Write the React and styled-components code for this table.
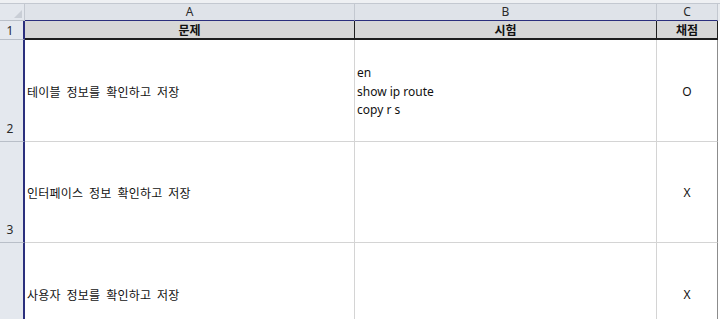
import React from 'react';
import styled, { createGlobalStyle } from 'styled-components';

const GlobalStyle = createGlobalStyle`
	html, body {
		margin: 0;
		padding: 0;
		background: #ffffff;
		overflow: hidden;
	}
	body {
		font-family: 'Noto Sans', 'Noto Sans CJK KR', sans-serif;
		font-size: 12px;
		color: #111;
	}
`;

const rows = [
	{ num: 2, task: '테이블 정보를 확인하고 저장', exam: ['en', 'show ip route', 'copy r s'], mark: 'O' },
	{ num: 3, task: '인터페이스 정보 확인하고 저장', exam: [], mark: 'X' },
	{ num: '', task: '사용자 정보를 확인하고 저장', exam: [], mark: 'X' },
];

const App = () => {
	return (
		<>
			<GlobalStyle />
			<StyledSheet>
				<div className='ribbon-edge' />
				<Grid>
					<Corner>
						<svg width='8' height='8' viewBox='0 0 8 8'>
							<polygon points='8,0 8,8 0,8' fill='#c9ced6' />
						</svg>
					</Corner>
					<ColHeader>A</ColHeader>
					<ColHeader>B</ColHeader>
					<ColHeader>C</ColHeader>
					<Filler $top />

					<RowHeader $first>1</RowHeader>
					<TitleCell>문제</TitleCell>
					<TitleCell>시험</TitleCell>
					<TitleCell>채점</TitleCell>
					<Filler />

					{rows.map((row, i) => (
						<React.Fragment key={i}>
							<RowHeader>{row.num}</RowHeader>
							<Cell>
								<Hangul>{row.task}</Hangul>
							</Cell>
							<Cell>
								{row.exam.map((line) => (
									<span key={line}>{line}</span>
								))}
							</Cell>
							<Cell $center $last>
								{row.mark}
							</Cell>
							<Filler />
						</React.Fragment>
					))}
				</Grid>
			</StyledSheet>
		</>
	);
};

const StyledSheet = styled.section`
	width: 720px;
	height: 319px;
	overflow: hidden;
	background: #ffffff;
	.ribbon-edge {
		height: 3px;
		background: #eef0f3;
		border-bottom: 1px solid #c3c8d0;
	}
`;

const Grid = styled.div`
	display: grid;
	grid-template-columns: 25px 330px 302px 61px 2px;
	grid-template-rows: 17px 19px 102px 101px 102px;
`;

const Corner = styled.div`
	background: #e3e7ed;
	border-right: 1px solid #c3c8d0;
	border-bottom: 1px solid #b9bfc8;
	display: flex;
	align-items: flex-end;
	justify-content: flex-end;
	padding: 0 2px 2px 0;
`;

const ColHeader = styled.div`
	background: #dfe3e9;
	border-right: 1px solid #c3c8d0;
	border-bottom: 1px solid #2b2f7d;
	display: flex;
	align-items: center;
	justify-content: center;
	font-size: 12px;
	color: #2a2a2a;
	line-height: 1;
`;

const RowHeader = styled.div`
	background: #e4e8ee;
	border-right: 2px solid #2b2f7d;
	border-bottom: 1px solid #b9bfc8;
	display: flex;
	align-items: ${({ $first }) => ($first ? 'center' : 'flex-end')};
	justify-content: center;
	padding-right: 3px;
	padding-bottom: ${({ $first }) => ($first ? '0' : '4px')};
	font-size: 12px;
	color: #2a2a2a;
`;

const TitleCell = styled.div`
	background: #d7d7d7;
	border-right: 1px solid #1e1e1e;
	border-bottom: 2px solid #1e1e1e;
	display: flex;
	align-items: center;
	justify-content: center;
	font-family: 'Noto Sans CJK KR', sans-serif;
	font-weight: 700;
	font-size: 12px;
	color: #111;
`;

const Cell = styled.div`
	border-right: 1px solid ${({ $last }) => ($last ? '#8c8c8c' : '#d4d4d4')};
	border-bottom: 1px solid #d4d4d4;
	display: flex;
	flex-direction: column;
	justify-content: center;
	align-items: ${({ $center }) => ($center ? 'center' : 'flex-start')};
	padding-left: ${({ $center }) => ($center ? '0' : '2px')};
	padding-top: 3px;
	line-height: 18.5px;
	font-size: 12px;
	color: #111;
`;

const Hangul = styled.span`
	font-family: 'Noto Sans CJK KR', sans-serif;
	font-size: 12px;
	letter-spacing: 0.2px;
	word-spacing: 3px;
`;

const Filler = styled.div`
	background: ${({ $top }) => ($top ? '#e8ebef' : '#ffffff')};
`;

export default App;
